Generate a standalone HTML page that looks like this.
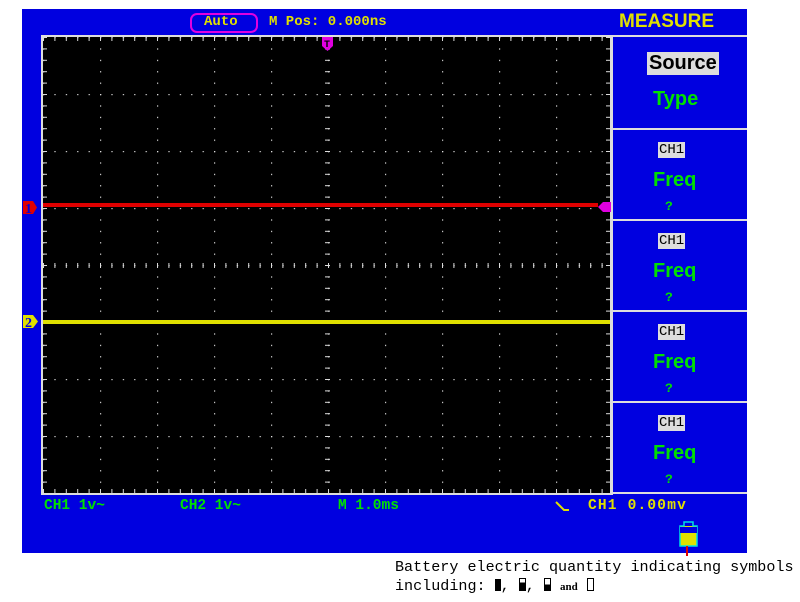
<!DOCTYPE html>
<html><head><style>
body{margin:0;width:800px;height:602px;background:#fff;position:relative;overflow:hidden;font-family:"Liberation Mono",monospace}
.t{position:absolute;font-weight:bold;white-space:nowrap}
</style></head><body>
<svg width="800" height="602" style="position:absolute;left:0;top:0">
<defs>
<pattern id="pv" x="100" y="37" width="57" height="11.4" patternUnits="userSpaceOnUse"><rect x="0" y="0" width="1.2" height="1.2" fill="#ddd"/></pattern>
<pattern id="ph" x="43" y="94" width="11.4" height="57" patternUnits="userSpaceOnUse"><rect x="0" y="0" width="1.2" height="1.2" fill="#ddd"/></pattern>
<pattern id="tx" x="43" y="0" width="11.4" height="602" patternUnits="userSpaceOnUse"><rect x="0" y="0" width="1" height="602" fill="#ddd"/></pattern>
<pattern id="ty" x="0" y="37" width="800" height="11.4" patternUnits="userSpaceOnUse"><rect x="0" y="0" width="800" height="1" fill="#ddd"/></pattern>
</defs>
<rect x="22" y="9" width="725" height="544" fill="#0000e0"/>
<rect x="41" y="35" width="572" height="460" fill="#ddd"/>
<rect x="43" y="37" width="567" height="456" fill="#000"/>
<rect x="43" y="37" width="567" height="456" fill="url(#pv)"/>
<rect x="43" y="37" width="567" height="456" fill="url(#ph)"/>
<rect x="43" y="37" width="567" height="4" fill="url(#tx)"/>
<rect x="43" y="489" width="567" height="4" fill="url(#tx)"/>
<rect x="43" y="37" width="4" height="456" fill="url(#ty)"/>
<rect x="606" y="37" width="4" height="456" fill="url(#ty)"/>
<rect x="43" y="263" width="567" height="5" fill="url(#tx)"/>
<rect x="325" y="37" width="5" height="456" fill="url(#ty)"/>
<rect x="613" y="35" width="134" height="2" fill="#ddd"/>
<rect x="613" y="128" width="134" height="2" fill="#ddd"/>
<rect x="613" y="219" width="134" height="2" fill="#ddd"/>
<rect x="613" y="310" width="134" height="2" fill="#ddd"/>
<rect x="613" y="401" width="134" height="2" fill="#ddd"/>
<rect x="613" y="492" width="134" height="2" fill="#ddd"/>
<rect x="43" y="203" width="555" height="4" fill="#e00000"/>
<rect x="43" y="320" width="567" height="4" fill="#e0e000"/>
<path d="M23 201h10l4 6.5l-4 6.5h-10z" fill="#e00000"/>
<text x="25" y="213" font-family="Liberation Serif" font-weight="bold" font-size="14" fill="#0000e0">1</text>
<path d="M23 315h10l5 6.5l-5 6.5h-10z" fill="#e0e000"/>
<text x="25" y="327" font-family="Liberation Serif" font-weight="bold" font-size="14" fill="#0000e0">2</text>
<path d="M598 207l5-5h8v10h-8z" fill="#e000e0"/>
<path d="M322 37h11v9l-5.5 5l-5.5-5z" fill="#e000e0"/>
<text x="324" y="47" font-size="10" font-weight="bold" fill="#000" font-family="Liberation Mono">T</text>
<rect x="191" y="14" width="66" height="18" rx="6" fill="none" stroke="#e000e0" stroke-width="2"/>
<path d="M556 502l8 8h5" stroke="#e0e000" stroke-width="2" fill="none"/>
<rect x="680" y="526" width="17" height="20" fill="#e0e000"/>
<path d="M680 546v-20h4v-4h9v4h4v20z" fill="none" stroke="#00e0e0" stroke-width="1.5"/>
<path d="M680 527h17v6h-17z" fill="#0000e0"/>
<rect x="686" y="546" width="2" height="10" fill="#e00000"/>
</svg>
<div class="t" style="left:204px;top:14px;font-size:14px;color:#e0e000">Auto</div>
<div class="t" style="left:269px;top:14px;font-size:14px;color:#e0e000">M Pos: 0.000ns</div>
<div class="t" style="left:619px;top:11px;font-size:19px;color:#e0e000;font-family:'Liberation Sans',sans-serif">MEASURE</div>
<div class="t" style="left:647px;top:52px;font-size:20px;color:#000;background:#ddd;padding:0 2px;font-family:'Liberation Sans',sans-serif">Source</div>
<div class="t" style="left:653px;top:88px;font-size:20px;color:#00e000;font-family:'Liberation Sans',sans-serif">Type</div>
<div class="t" style="left:658px;top:142px;font-size:14px;color:#000;background:#ddd;padding:0 1px;font-weight:normal">CH1</div>
<div class="t" style="left:653px;top:169px;font-size:20px;color:#00e000;font-family:'Liberation Sans',sans-serif">Freq</div>
<div class="t" style="left:665px;top:199px;font-size:13px;color:#00e000">?</div>
<div class="t" style="left:658px;top:233px;font-size:14px;color:#000;background:#ddd;padding:0 1px;font-weight:normal">CH1</div>
<div class="t" style="left:653px;top:260px;font-size:20px;color:#00e000;font-family:'Liberation Sans',sans-serif">Freq</div>
<div class="t" style="left:665px;top:290px;font-size:13px;color:#00e000">?</div>
<div class="t" style="left:658px;top:324px;font-size:14px;color:#000;background:#ddd;padding:0 1px;font-weight:normal">CH1</div>
<div class="t" style="left:653px;top:351px;font-size:20px;color:#00e000;font-family:'Liberation Sans',sans-serif">Freq</div>
<div class="t" style="left:665px;top:381px;font-size:13px;color:#00e000">?</div>
<div class="t" style="left:658px;top:415px;font-size:14px;color:#000;background:#ddd;padding:0 1px;font-weight:normal">CH1</div>
<div class="t" style="left:653px;top:442px;font-size:20px;color:#00e000;font-family:'Liberation Sans',sans-serif">Freq</div>
<div class="t" style="left:665px;top:472px;font-size:13px;color:#00e000">?</div>
<div class="t" style="left:44px;top:498px;font-size:14.5px;color:#00e000">CH1 1v~</div>
<div class="t" style="left:180px;top:498px;font-size:14.5px;color:#00e000">CH2 1v~</div>
<div class="t" style="left:338px;top:498px;font-size:14.5px;color:#00e000">M 1.0ms</div>
<div class="t" style="left:588px;top:498px;font-size:14.5px;color:#e0e000;letter-spacing:1.2px">CH1 0.00mv</div>
<div class="t" style="left:395px;top:558px;font-size:15.1px;color:#000;font-weight:normal">Battery electric quantity indicating symbols</div>
<div class="t" style="left:395px;top:577px;font-size:15.1px;color:#000;font-weight:normal">including: <span style="display:inline-block;width:6px;height:12px;background:#000;vertical-align:-1px"></span>, <span style="display:inline-block;width:5px;height:11px;border:1px solid #000;background:linear-gradient(#fff 30%,#000 30%);vertical-align:-1px"></span>, <span style="display:inline-block;width:5px;height:11px;border:1px solid #000;background:linear-gradient(#fff 50%,#000 50%);vertical-align:-1px"></span> <b style="font-size:11px;font-family:'Liberation Serif',serif">and</b> <span style="display:inline-block;width:5px;height:11px;border:1px solid #000;vertical-align:-1px"></span></div>
</body></html>
